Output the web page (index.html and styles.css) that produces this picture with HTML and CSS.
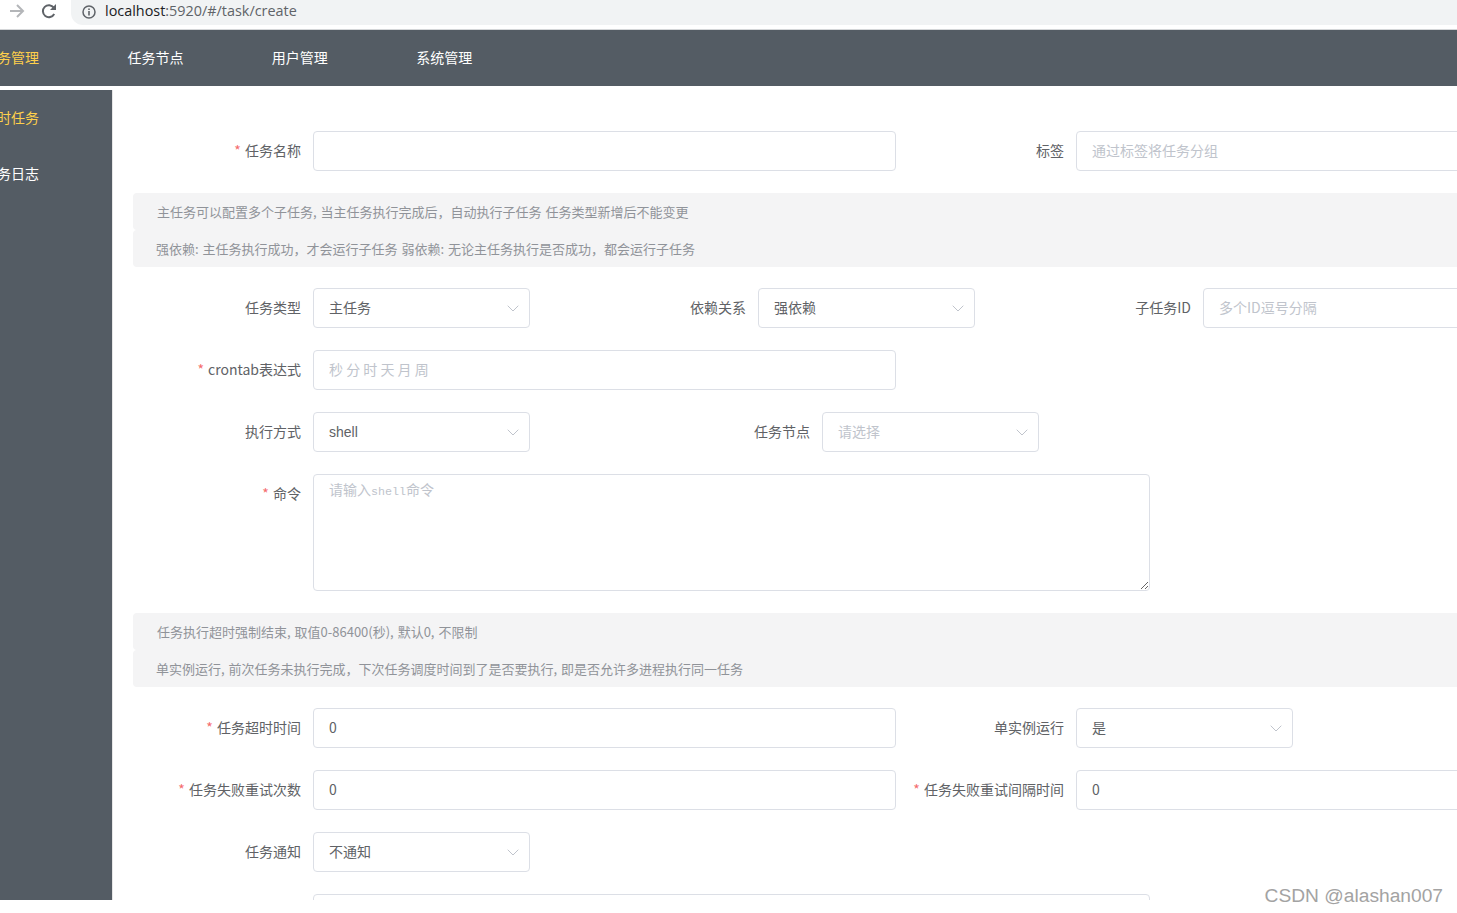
FILE: index.html
```html
<!DOCTYPE html>
<html lang="zh-CN">
<head>
<meta charset="utf-8">
<title>localhost:5920/#/task/create</title>
<link rel="stylesheet" href="styles.css">
</head>
<body>
<div class="page">
  <div class="chrome">
    <svg class="chrome-icon fwd" viewBox="0 0 16 16"><path d="M1 8h13M8 2l6 6-6 6" fill="none" stroke="#b4b6b9" stroke-width="2"/></svg>
    <svg class="chrome-icon reload" viewBox="0 0 16 16"><path d="M13.200 11a6 6 0 1 1-.4-6.300" fill="none" stroke="#5f6368" stroke-width="2"/><path d="M15 1v6H9z" fill="#5f6368"/></svg>
    <div class="omnibox">
      <svg class="info" viewBox="0 0 14 14"><circle cx="7" cy="7" r="6" fill="none" stroke="#5f6368" stroke-width="1.500"/><path d="M6.200 6h1.600v4.400H6.200zM6.200 3.400h1.600V5H6.200z" fill="#5f6368"/></svg>
      <span class="url"><span class="host">localhost</span>:5920/#/task/create</span>
    </div>
  </div>
  <nav class="topnav">
    <a class="topnav-item active">任务管理</a>
    <a class="topnav-item">任务节点</a>
    <a class="topnav-item">用户管理</a>
    <a class="topnav-item">系统管理</a>
  </nav>
  <div class="body">
    <aside class="sidebar">
      <a class="side-item active">定时任务</a>
      <a class="side-item">任务日志</a>
    </aside>
    <main class="main">
      <form class="form">
        <div class="row">
          <label class="label first"><i>*</i> 任务名称</label>
          <input class="input wide" type="text">
          <label class="label">标签</label>
          <input class="input open" type="text" placeholder="通过标签将任务分组">
        </div>
        <div class="notes">
          <div class="note">主任务可以配置多个子任务, 当主任务执行完成后，自动执行子任务 任务类型新增后不能变更</div>
          <div class="note shift">强依赖: 主任务执行成功，才会运行子任务 弱依赖: 无论主任务执行是否成功，都会运行子任务</div>
        </div>
        <div class="row">
          <label class="label first">任务类型</label>
          <div class="select"><span>主任务</span><svg viewBox="0 0 12 7"><path d="M.7.7 6 6l5.300-5.300" fill="none" stroke="#c0c4cc"/></svg></div>
          <label class="label mid">依赖关系</label>
          <div class="select"><span>强依赖</span><svg viewBox="0 0 12 7"><path d="M.7.7 6 6l5.300-5.300" fill="none" stroke="#c0c4cc"/></svg></div>
          <label class="label mid">子任务ID</label>
          <input class="input open" type="text" placeholder="多个ID逗号分隔">
        </div>
        <div class="row">
          <label class="label first"><i>*</i> crontab表达式</label>
          <input class="input wide" type="text" placeholder="秒 分 时 天 月 周">
        </div>
        <div class="row">
          <label class="label first">执行方式</label>
          <div class="select"><span class="latin">shell</span><svg viewBox="0 0 12 7"><path d="M.7.7 6 6l5.300-5.300" fill="none" stroke="#c0c4cc"/></svg></div>
          <label class="label far">任务节点</label>
          <div class="select"><span class="ph">请选择</span><svg viewBox="0 0 12 7"><path d="M.7.7 6 6l5.300-5.300" fill="none" stroke="#c0c4cc"/></svg></div>
        </div>
        <div class="row top">
          <label class="label first"><i>*</i> 命令</label>
          <div class="area-wrap">
            <textarea class="area"></textarea>
            <span class="area-ph">请输入<b>shell</b>命令</span>
          </div>
        </div>
        <div class="notes">
          <div class="note">任务执行超时强制结束, 取值0-86400(秒), 默认0, 不限制</div>
          <div class="note shift">单实例运行, 前次任务未执行完成，下次任务调度时间到了是否要执行, 即是否允许多进程执行同一任务</div>
        </div>
        <div class="row">
          <label class="label first"><i>*</i> 任务超时时间</label>
          <input class="input wide" type="text" value="0">
          <label class="label">单实例运行</label>
          <div class="select"><span>是</span><svg viewBox="0 0 12 7"><path d="M.7.7 6 6l5.300-5.300" fill="none" stroke="#c0c4cc"/></svg></div>
        </div>
        <div class="row">
          <label class="label first"><i>*</i> 任务失败重试次数</label>
          <input class="input wide" type="text" value="0">
          <label class="label"><i>*</i> 任务失败重试间隔时间</label>
          <input class="input open" type="text" value="0">
        </div>
        <div class="row">
          <label class="label first">任务通知</label>
          <div class="select"><span>不通知</span><svg viewBox="0 0 12 7"><path d="M.7.7 6 6l5.300-5.300" fill="none" stroke="#c0c4cc"/></svg></div>
        </div>
        <div class="row top">
          <div class="label first"></div>
          <div class="area-wrap"><textarea class="area"></textarea></div>
        </div>
      </form>
    </main>
  </div>
  <div class="watermark">CSDN @alashan007</div>
</div>
</body>
</html>
```
FILE: styles.css
```css
* { box-sizing: border-box; }
html, body { margin: 0; height: 100%; background: #fff; overflow: hidden; }
body { font-family: "Noto Sans CJK SC", "Liberation Sans", sans-serif; font-size: 14px; color: #606266; }
.page { position: relative; width: 1457px; height: 913px; overflow: hidden; }

.chrome { display: flex; align-items: flex-start; height: 30px; border-bottom: 1px solid #d4d6d8; }
.chrome-icon { width: 16px; height: 16px; margin-top: 3px; flex: none; }
.fwd { margin-left: 9px; }
.reload { margin-left: 16px; }
.omnibox { display: flex; align-items: center; flex: 1; height: 25px; margin-left: 14px; padding-left: 11px; background: #f1f3f4; border-bottom-left-radius: 12px; }
.info { width: 14px; height: 14px; flex: none; margin-top: -1px; }
.url { margin-left: 9px; margin-top: -3px; font-family: "Open Sans", "Noto Sans", sans-serif; font-size: 14.400px; line-height: 20px; color: #5f6368; }
.host { color: #202124; }

.topnav { display: flex; height: 56px; margin-bottom: 4px; background: #545c64; overflow: hidden; }
.topnav-item { flex: none; width: 144.400px; line-height: 54px; color: #fff; }
.topnav-item:first-child { margin-left: -17px; }
.active { color: #ffd04b; }

.body { display: flex; height: 810px; overflow: hidden; }
.sidebar { flex: none; width: 113px; background: #545c64; border-right: 1px solid #e6e6e6; }
.side-item { display: block; height: 56px; margin-left: -17px; line-height: 54px; color: #fff; }
.side-item.active { color: #ffd04b; }

.main { flex: none; width: 1344px; padding: 41px 0 0 20px; }
.form { width: 1400px; }
.row { display: flex; align-items: center; margin-bottom: 22px; }
.row.top { align-items: flex-start; }
.label { flex: none; width: 180px; height: 40px; padding-right: 12px; text-align: right; line-height: 38px; white-space: nowrap; }
.label i { font-style: normal; color: #f56c6c; margin-right: 1px; }
.label.mid { width: 228px; }
.label.far { width: 292px; }

.input { height: 40px; padding: 0 15px 2px; border: 1px solid #dcdfe6; border-radius: 4px; background: #fff; font: inherit; color: #606266; outline: none; }
.input::placeholder, .ph { color: #c0c4cc; }
.wide { width: 583px; flex: none; }
.open { width: 500px; flex: none; }

.select { display: flex; align-items: center; justify-content: space-between; flex: none; width: 217px; height: 40px; padding: 0 10px 2px 15px; border: 1px solid #dcdfe6; border-radius: 4px; background: #fff; }
.select svg { width: 12px; height: 7px; margin-top: 2px; }
.latin { margin-top: 2px; font-family: "Liberation Sans", sans-serif; }

.notes { margin-bottom: 21px; }
.note { height: 37px; margin-right: -100px; padding-left: 24px; border-radius: 4px; background: #f4f4f5; font-family: "Noto Sans CJK TC", "Noto Sans CJK SC", sans-serif; font-size: 13px; line-height: 38px; color: #909399; word-spacing: 1px; }
.note.shift { padding-left: 23px; }

.area-wrap { position: relative; flex: none; width: 837px; }
.area { display: block; width: 837px; height: 117px; padding: 5px 15px; border: 1px solid #dcdfe6; border-radius: 4px; background: #fff; outline: none; resize: vertical; }
.area-ph { position: absolute; left: 16px; top: 5px; line-height: 21px; color: #c0c4cc; pointer-events: none; }
.area-ph b { font-family: "Liberation Mono", monospace; font-weight: 400; font-size: 11.700px; }

.watermark { position: absolute; right: 14px; top: 883px; font-family: "Liberation Sans", Arial, sans-serif; font-size: 19.200px; line-height: 26px; color: #a3a3a3; }
```
